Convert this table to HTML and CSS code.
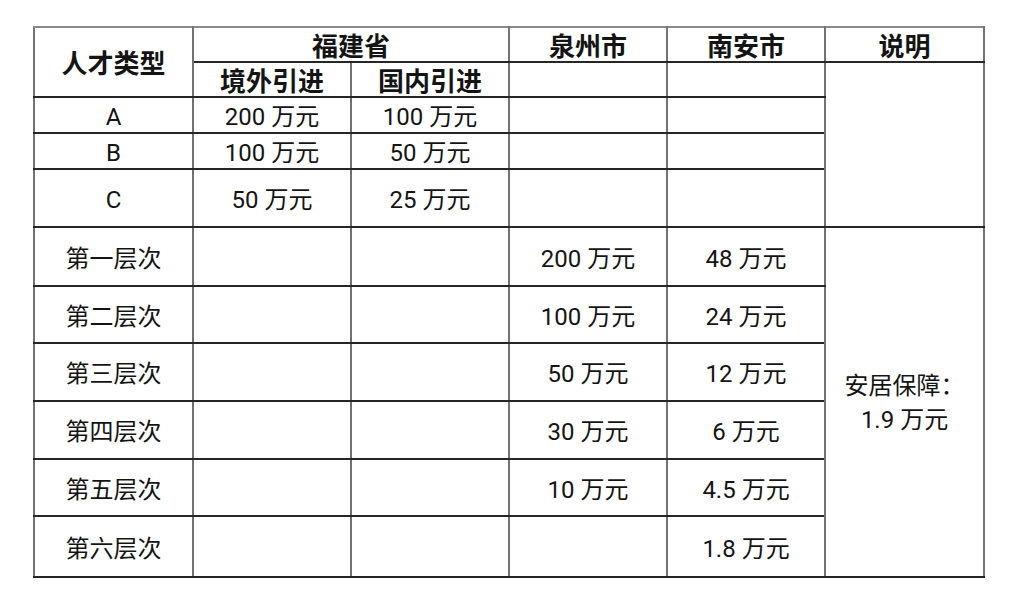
FILE: index.html
```html
<!DOCTYPE html>
<html lang="zh-CN">
<head>
<meta charset="utf-8">
<title>人才类型</title>
<link rel="stylesheet" href="styles.css">
</head>
<body>
<table class="grid">
  <colgroup>
    <col class="c1"><col class="c2"><col class="c3"><col class="c4"><col class="c5"><col class="c6">
  </colgroup>
  <tbody>
    <tr class="h1">
      <th rowspan="2">人才类型</th>
      <th colspan="2">福建省</th>
      <th>泉州市</th>
      <th>南安市</th>
      <th>说明</th>
    </tr>
    <tr class="h2">
      <th>境外引进</th>
      <th>国内引进</th>
      <td></td>
      <td></td>
      <td rowspan="4"></td>
    </tr>
    <tr class="r-a"><td>A</td><td>200 万元</td><td>100 万元</td><td></td><td></td></tr>
    <tr class="r-b"><td>B</td><td>100 万元</td><td>50 万元</td><td></td><td></td></tr>
    <tr class="r-c"><td>C</td><td>50 万元</td><td>25 万元</td><td></td><td></td></tr>
    <tr class="r-1"><td>第一层次</td><td></td><td></td><td>200 万元</td><td>48 万元</td><td rowspan="6" class="note">安居保障：<br>1.9 万元</td></tr>
    <tr class="r-2"><td>第二层次</td><td></td><td></td><td>100 万元</td><td>24 万元</td></tr>
    <tr class="r-3"><td>第三层次</td><td></td><td></td><td>50 万元</td><td>12 万元</td></tr>
    <tr class="r-4"><td>第四层次</td><td></td><td></td><td>30 万元</td><td>6 万元</td></tr>
    <tr class="r-5"><td>第五层次</td><td></td><td></td><td>10 万元</td><td>4.5 万元</td></tr>
    <tr class="r-6"><td>第六层次</td><td></td><td></td><td></td><td>1.8 万元</td></tr>
  </tbody>
</table>
</body>
</html>
```
FILE: styles.css
```css
html, body {
  margin: 0;
  padding: 0;
  background: #ffffff;
}
body {
  padding: 26px 0 0 33px;
  font-family: Roboto, "Noto Sans CJK SC", sans-serif;
  color: #141414;
}
.grid {
  border-collapse: collapse;
  table-layout: fixed;
  width: 950px;
  font-size: 24px;
  line-height: 28px;
}
.c1 { width: 159px; }
.c2 { width: 158px; }
.c3 { width: 158px; }
.c4 { width: 158px; }
.c5 { width: 158px; }
.c6 { width: 159px; }
.grid th,
.grid td {
  padding: 4px 0 0;
  text-align: center;
  vertical-align: middle;
  border-top: 2px solid #262626;
  border-bottom: 2px solid #262626;
  border-left: 2px solid #727272;
  border-right: 2px solid #727272;
  white-space: nowrap;
}
.grid th {
  padding: 0;
  font-family: "Noto Sans CJK SC", sans-serif;
  font-size: 26px;
  font-weight: 700;
}
.h1 th { border-top-color: #8a8a8a; }
.h1 { height: 35px; }
.h2 { height: 35px; }
.r-a { height: 36px; }
.r-b { height: 36px; }
.r-c { height: 58px; }
.r-1 { height: 59px; }
.r-2 { height: 57px; }
.r-3 { height: 58px; }
.r-4 { height: 58px; }
.r-5 { height: 57px; }
.r-6 { height: 61px; }
.grid td.note {
  line-height: 34px;
  padding-top: 2px;
}
```
